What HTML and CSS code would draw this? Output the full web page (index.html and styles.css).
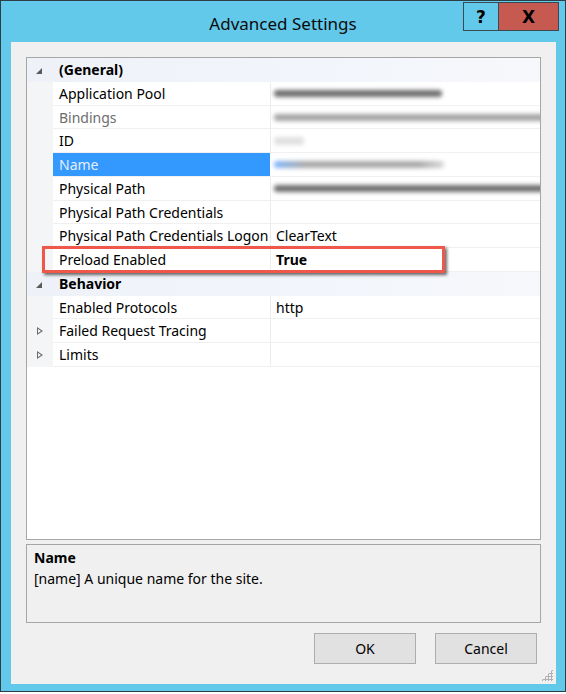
FILE: index.html
```html
<!DOCTYPE html>
<html lang="en">
<head>
  <meta charset="UTF-8">
  <title>Advanced Settings</title>
  <link rel="stylesheet" href="styles.css">
</head>
<body>
  <div class="window">
    <div class="titlebar">
      <span></span>
      <div class="title">Advanced Settings</div>
      <div class="controls">
        <button class="help">?</button>
        <button class="close">X</button>
      </div>
    </div>

    <div class="client">
      <div class="grid">
        <div class="row cat">
          <span class="gutter"><i class="tri open"></i></span>
          <span class="label">(General)</span>
          <span class="value"></span>
        </div>
        <div class="row">
          <span class="gutter"></span>
          <span class="label">Application Pool</span>
          <span class="value"><i class="smudge dark" style="width:168px"></i></span>
        </div>
        <div class="row">
          <span class="gutter"></span>
          <span class="label muted">Bindings</span>
          <span class="value"><i class="smudge mid wide"></i></span>
        </div>
        <div class="row">
          <span class="gutter"></span>
          <span class="label">ID</span>
          <span class="value"><i class="smudge faint" style="width:30px"></i></span>
        </div>
        <div class="row selected">
          <span class="gutter"></span>
          <span class="label">Name</span>
          <span class="value"><i class="smudge mid fade" style="width:170px"></i></span>
        </div>
        <div class="row">
          <span class="gutter"></span>
          <span class="label">Physical Path</span>
          <span class="value"><i class="smudge dark wide"></i></span>
        </div>
        <div class="row">
          <span class="gutter"></span>
          <span class="label">Physical Path Credentials</span>
          <span class="value"></span>
        </div>
        <div class="row">
          <span class="gutter"></span>
          <span class="label">Physical Path Credentials Logon</span>
          <span class="value">ClearText</span>
        </div>
        <div class="row">
          <span class="gutter"></span>
          <span class="label">Preload Enabled</span>
          <span class="value strong">True</span>
        </div>
        <div class="row cat">
          <span class="gutter"><i class="tri open"></i></span>
          <span class="label">Behavior</span>
          <span class="value"></span>
        </div>
        <div class="row">
          <span class="gutter"></span>
          <span class="label">Enabled Protocols</span>
          <span class="value">http</span>
        </div>
        <div class="row">
          <span class="gutter"><i class="tri shut"></i></span>
          <span class="label">Failed Request Tracing</span>
          <span class="value"></span>
        </div>
        <div class="row">
          <span class="gutter"><i class="tri shut"></i></span>
          <span class="label">Limits</span>
          <span class="value"></span>
        </div>

        <div class="callout"></div>
      </div>

      <div class="desc">
        <div class="desc-title">Name</div>
        <div class="desc-text">[name] A unique name for the site.</div>
      </div>

      <div class="buttons">
        <button class="btn">OK</button>
        <button class="btn">Cancel</button>
      </div>
      <div class="grip"></div>
    </div>
  </div>
</body>
</html>
```

FILE: styles.css
```css
html, body { margin: 0; padding: 0; background: #fff; }
body { font-family: "Noto Sans", "Open Sans", sans-serif; font-size: 14px; color: #000; }

.window { width: 564px; height: 690px; border: 1px solid #2d3e46; background: #63c9ea; display: flex; flex-direction: column; }

.titlebar { height: 41px; display: grid; grid-template-columns: 1fr auto 1fr; align-items: start; }
.title { font-size: 17px; line-height: 20px; padding-top: 13px; color: #0b0b0b; }
.controls { justify-self: end; display: flex; margin: 1px 6px 0 0; }
.controls button { height: 29px; border: 1px solid #3a4a52; font-family: "DejaVu Sans", sans-serif; font-weight: bold; font-size: 17px; padding: 0; color: #000; }
.help { width: 35px; background: #63c9ea; border-right: none !important; }
.close { width: 61px; background: #c75a50; }

.client { flex: 1; margin: 0 9px 7px 10px; background: #f0f0f0; padding: 15px 15px 0 15px; position: relative; display: flex; flex-direction: column; }

.grid { height: 481px; border: 1px solid #a6a6a6; background: #fff; position: relative; }
.row { display: grid; grid-template-columns: 26px 218px 1fr; height: 23.75px; line-height: 23px; }
.gutter { background: #f4f5f7; display: flex; align-items: center; justify-content: center; padding-right: 2px; }
.label { padding-left: 6px; border-bottom: 1px solid #f0f0f0; border-right: 1px solid #ececec; white-space: nowrap; overflow: hidden; }
.value { padding-left: 5px; border-bottom: 1px solid #f0f0f0; white-space: nowrap; overflow: hidden; position: relative; }
.muted { color: #6d6d6d; }
.strong { font-weight: bold; }

.cat { background: linear-gradient(90deg, #eef2f8, #f3f6fb 70%, #f7f8fb); }
.cat .gutter { background: transparent; }
.cat .label { font-weight: bold; border: none; }
.cat .value { border: none; }

.selected .label { background: #3399ff; color: #e6eefb; border-right-color: #fff; }

.tri { display: block; width: 0; height: 0; }
.tri.open { border-left: 6px solid transparent; border-bottom: 6px solid #5a5a5a; margin-top: 2px; }
.tri.shut { width: 5px; height: 8px; border: none; background: none; position: relative; }
.tri.shut::before { content: ""; position: absolute; left: 0; top: 0; border-top: 4px solid transparent; border-bottom: 4px solid transparent; border-left: 6px solid #6d6d6d; }
.tri.shut::after { content: ""; position: absolute; left: 1px; top: 2px; border-top: 2px solid transparent; border-bottom: 2px solid transparent; border-left: 3px solid #fff; }

.smudge { display: block; height: 7px; margin-top: 8px; margin-left: -2px; border-radius: 3px; filter: blur(2px); }
.smudge.dark { background: #6e6e6e; }
.smudge.mid { background: #a4a4a4; }
.smudge.faint { background: #e0e0e0; height: 8px; }
.smudge.wide { width: 280px; }
.smudge.fade { background: linear-gradient(90deg, #7fb6ff, #a8a8a8 18%, #a8a8a8 85%, #d8d8d8); }

.callout { position: absolute; left: 15px; top: 188px; width: 397px; height: 21px; border: 3px solid #f0574b; box-shadow: 2px 2px 3px rgba(0, 0, 0, 0.6); pointer-events: none; }

.desc { margin-top: 4px; height: 71px; border: 1px solid #a6a6a6; padding: 3px 7px; }
.desc-title { font-weight: bold; line-height: 20px; }
.desc-text { line-height: 22px; }

.buttons { display: flex; justify-content: flex-end; gap: 19px; margin-top: 10px; padding-right: 4px; }
.btn { width: 102px; height: 31px; background: #e1e1e1; border: 1px solid #adadad; font-family: inherit; font-size: 14px; color: #000; padding: 0; }

.grip { position: absolute; right: 3px; bottom: 3px; width: 12px; height: 12px; background: radial-gradient(circle, #b0b0b0 1px, transparent 1.3px) 0 0 / 3px 3px; clip-path: polygon(100% 0, 100% 100%, 0 100%); }
```
